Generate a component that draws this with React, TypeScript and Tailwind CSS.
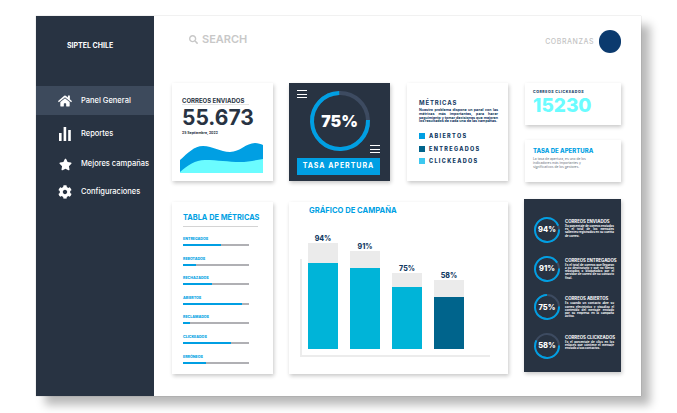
import { FaCog, FaHome, FaSearch, FaStar } from 'react-icons/fa'

const font = { fontFamily: 'Inter, "Liberation Sans", sans-serif' }

const menu = [
  { label: 'Panel General', icon: <FaHome className="text-[14px]" />, active: true, h: 'h-[29px]' },
  { label: 'Reportes', icon: <Bars />, h: 'h-[37px]' },
  { label: 'Mejores campañas', icon: <FaStar className="text-[13px]" />, h: 'h-[24px]' },
  { label: 'Configuraciones', icon: <FaCog className="text-[14px]" />, h: 'h-[32px]' },
]

const metricas = [
  { label: 'ENTREGADOS', pct: 58 },
  { label: 'REBOTADOS', pct: 19 },
  { label: 'RECHAZADOS', pct: 44 },
  { label: 'ABIERTOS', pct: 89 },
  { label: 'RECLAMADOS', pct: 10 },
  { label: 'CLICKEADOS', pct: 72 },
  { label: 'ERRÓNEOS', pct: 35 },
]

const barras = [
  { label: '94%', total: 106, fill: 86, color: 'bg-[#00b4d8]' },
  { label: '91%', total: 98, fill: 81, color: 'bg-[#00b4d8]' },
  { label: '75%', total: 76, fill: 62, color: 'bg-[#00b4d8]' },
  { label: '58%', total: 69, fill: 52, color: 'bg-[#00648c]' },
]

const resumen = [
  { pct: 94, title: 'CORREOS ENVIADOS', text: 'Su porcentaje de correos enviados es el total de los mensajes salientes registrados en su cuenta de correo.' },
  { pct: 91, title: 'CORREOS ENTREGADOS', text: 'Es el total de correos que llegaron a su destinatario y que no fueron rebotados o bloqueados por el servidor de correo de su contacto final.' },
  { pct: 75, title: 'CORREOS ABIERTOS', text: 'Es cuando un contacto abre su correo electrónico y visualiza el contenido del mensaje enviado por su empresa en la campaña activa.' },
  { pct: 58, title: 'CORREOS CLICKEADOS', text: 'Es el porcentaje de clics en los enlaces que contiene el mensaje enviado a sus contactos.' },
]

function Bars() {
  return (
    <svg width="12" height="14" viewBox="0 0 12 14" fill="white">
      <rect x="0" y="6" width="2.6" height="8" />
      <rect x="4.6" y="0" width="2.6" height="14" />
      <rect x="9.2" y="3" width="2.6" height="11" />
    </svg>
  )
}

function Hamburger() {
  return (
    <div className="flex w-[10px] flex-col gap-[2.5px]">
      <div className="h-px bg-white" />
      <div className="h-px bg-white" />
      <div className="h-px bg-white" />
    </div>
  )
}

function Ring({ pct, size, stroke }: { pct: number; size: number; stroke: number }) {
  const r = (size - stroke) / 2
  const c = 2 * Math.PI * r
  return (
    <svg width={size} height={size} className="absolute inset-0 rotate-[-2deg]">
      <circle cx={size / 2} cy={size / 2} r={r} fill="none" stroke="#3d4b61" strokeWidth={stroke} />
      <circle cx={size / 2} cy={size / 2} r={r} fill="none" stroke="#009fe3" strokeWidth={stroke} strokeDasharray={`${(c * pct) / 100} ${c}`} />
    </svg>
  )
}

function Card({ className, children }: { className: string; children: React.ReactNode }) {
  return <div className={`shadow-[1px_2px_4px_rgba(0,0,0,0.22)] ${className}`}>{children}</div>
}

export default function App() {
  return (
    <div className="h-[413px] w-[677px] overflow-hidden bg-white pl-9 pt-4" style={font}>
      <div className="flex h-[380px] w-[605px] bg-white shadow-[0_0_1px_rgba(0,0,0,0.3),9px_9px_9px_rgba(0,0,0,0.28)]">
        {/* Sidebar */}
        <aside className="w-[118px] shrink-0 bg-[#283342] text-white">
          <div className="flex h-[70px] items-start pl-[31px] pt-[25px] text-[7px] font-bold">SIPTEL CHILE</div>
          <nav>
            {menu.map(m => (
              <div key={m.label} className={`flex items-center pl-[18px] ${m.h} ${m.active ? 'bg-[#3d4a5c]' : ''}`}>
                <span className="mr-[5px] flex w-[22px] shrink-0 justify-center">{m.icon}</span>
                <span className="whitespace-nowrap text-[7.5px] font-medium">{m.label}</span>
              </div>
            ))}
          </nav>
        </aside>

        <main className="min-w-0 flex-1">
          {/* Header */}
          <header className="flex h-[67px] items-start pl-[35px] pr-[20px] pt-[14px]">
            <div className="flex items-center gap-[4px] pt-[1px] text-[#c8c8c8]">
              <FaSearch className="text-[9px]" />
              <span className="text-[11px] font-semibold">SEARCH</span>
            </div>
            <div className="ml-auto flex items-center gap-[5px]">
              <span className="pt-[2px] text-[7px] font-medium tracking-[0.08em] text-[#c4c4c4]">COBRANZAS</span>
              <div className="h-[23px] w-[22px] rounded-full bg-[#0b3a6e]" />
            </div>
          </header>

          <div className="flex flex-col gap-[20px] pl-[18px]">
            {/* Primera fila */}
            <div className="flex gap-[16px]">
              <Card className="h-[98px] w-[101px] bg-white pt-[15px]">
                <div className="mx-[10px] w-[67px] whitespace-nowrap border-b border-[#e4e4e4] text-[6px] font-bold leading-[6px] text-[#283342]">CORREOS ENVIADOS</div>
                <div className="mt-[1px] pl-[10px] text-[21px] font-bold leading-[24px] text-[#283342]">55.673</div>
                <div className="mt-[1px] pl-[10px] text-[3.5px] font-bold leading-[5px] text-[#283342]">25 Septiembre, 2022</div>
                <svg width="83" height="30" viewBox="0 0 83 30" className="ml-[8px] mt-[7px]">
                  <path d="M0 17 C 8 10 14 3 23 3 C 33 3 40 9 50 9 C 60 9 66 0 75 0 C 78 0 81 1 83 2 V30 H0 Z" fill="#009fe3" />
                  <path d="M0 29 C 8 22 15 17 25 17 C 38 17 48 19 60 19 C 68 19 76 17 83 16 V30 H0 Z" fill="#6bfcff" />
                </svg>
              </Card>

              <Card className="relative flex h-[98px] w-[101px] flex-col items-center bg-[#283342] pt-[8px]">
                <div className="absolute left-[8px] top-[7px]"><Hamburger /></div>
                <div className="absolute right-[10px] top-[62px]"><Hamburger /></div>
                <div className="relative flex h-[60px] w-[60px] items-center justify-center">
                  <Ring pct={75} size={60} stroke={4} />
                  <span className="text-[16px] font-black text-white">75%</span>
                </div>
                <div className="mt-[7px] flex h-[17px] w-[83px] items-center justify-center self-start ml-[8px] bg-[#009fe3] text-[7px] font-bold tracking-[0.14em] text-white whitespace-nowrap">TASA APERTURA</div>
              </Card>

              <Card className="ml-px h-[98px] w-[101px] bg-white pl-[12px] pr-[10px] pt-[16px] text-[#123a63]">
                <div className="text-[6px] font-bold leading-[7px] tracking-[0.14em]">MÉTRICAS</div>
                <p className="mt-[3px] text-justify text-[3.6px] font-bold leading-[3.8px]">Nuestro problema dispone un panel con las métricas más importantes, para hacer seguimiento y tomar decisiones que mejoren los resultados de cada una de las campañas.</p>
                <div className="mt-[9px] flex flex-col gap-[6.5px]">
                  <div className="flex items-center gap-[4px] text-[5.5px] font-extrabold leading-[6px] tracking-[0.24em]"><span className="h-[6px] w-[6px] bg-[#009fe3]" />ABIERTOS</div>
                  <div className="flex items-center gap-[4px] text-[5.5px] font-extrabold leading-[6px] tracking-[0.24em]"><span className="h-[6px] w-[6px] bg-[#00648c]" />ENTREGADOS</div>
                  <div className="flex items-center gap-[4px] text-[5.5px] font-extrabold leading-[6px] tracking-[0.24em]"><span className="h-[6px] w-[6px] bg-[#3cc8f0]" />CLICKEADOS</div>
                </div>
              </Card>

              <div className="ml-px flex w-[96px] flex-col gap-[15px]">
                <Card className="h-[42px] bg-white pl-[8px] pt-[7px]">
                  <div className="text-[3.5px] font-extrabold leading-[4px] tracking-[0.16em] text-[#123a63]">CORREOS CLICKEADOS</div>
                  <div className="mt-[2px] text-[19px] font-extrabold leading-[19px] text-[#6bfcff]">15230</div>
                </Card>
                <Card className="h-[42px] bg-white pl-[8px] pr-[26px] pt-[7px]">
                  <div className="whitespace-nowrap text-[6px] font-extrabold leading-[7px] text-[#009fe3]">TASA DE APERTURA</div>
                  <p className="mt-[3px] text-[3.3px] leading-[4px] text-[#6b7280]">La tasa de apertura, es uno de los indicadores más importantes y significativos de los gestores.</p>
                </Card>
              </div>
            </div>

            {/* Segunda fila */}
            <div className="flex items-start gap-[16px]">
              <Card className="h-[172px] w-[101px] bg-white pl-[11px] pt-[11px]">
                <div className="w-[75px] whitespace-nowrap border-b border-[#d4d4d4] pb-[4px] text-[7.4px] font-bold leading-[9px] text-[#009fe3]">TABLA DE MÉTRICAS</div>
                <div className="mt-[9px] flex flex-col">
                  {metricas.map(m => (
                    <div key={m.label} className="h-[19.6px]">
                      <div className="text-[3.6px] font-extrabold leading-[6px] text-[#009fe3]">{m.label}</div>
                      <div className="mt-[2px] h-[2px] w-[66px] bg-[#b0b0b4]">
                        <div className="h-full bg-[#009fe3]" style={{ width: `${m.pct}%` }} />
                      </div>
                    </div>
                  ))}
                </div>
              </Card>

              <Card className="h-[172px] w-[219px] bg-white pl-[11px] pt-[4px]">
                <div className="pl-[9px] text-[7.6px] font-bold leading-[9px] text-[#009fe3]">GRÁFICO DE CAMPAÑA</div>
                <div className="mt-[44px] flex h-[98px] w-[190px] items-end gap-[12px] border-b-2 border-l-2 border-[#ececec] pb-[6px] pl-[6px]">
                  {barras.map(b => (
                    <div key={b.label} className="flex w-[30px] flex-col items-center">
                      <span className="text-[7px] font-extrabold leading-[9px] text-[#123a63]">{b.label}</span>
                      <div className="flex w-full flex-col justify-end bg-[#ebebeb]" style={{ height: b.total }}>
                        <div className={b.color} style={{ height: b.fill }} />
                      </div>
                    </div>
                  ))}
                </div>
              </Card>

              <Card className="-mt-[3px] flex h-[173px] w-[97px] flex-col bg-[#283342] pl-[10px] pt-[18px] text-white">
                {resumen.map(r => (
                  <div key={r.title} className="flex h-[38.7px] gap-[5px]">
                    <div className="relative flex h-[26px] w-[26px] shrink-0 items-center justify-center">
                      <Ring pct={r.pct} size={26} stroke={2} />
                      <span className="text-[7.5px] font-extrabold">{r.pct}%</span>
                    </div>
                    <div className="w-[49px] pt-[2px]">
                      <div className="whitespace-nowrap text-[4.3px] font-bold leading-[5px]">{r.title}</div>
                      <p className="mt-[1px] text-justify text-[2.9px] font-bold leading-[3.2px]">{r.text}</p>
                    </div>
                  </div>
                ))}
              </Card>
            </div>
          </div>
        </main>
      </div>
    </div>
  )
}
